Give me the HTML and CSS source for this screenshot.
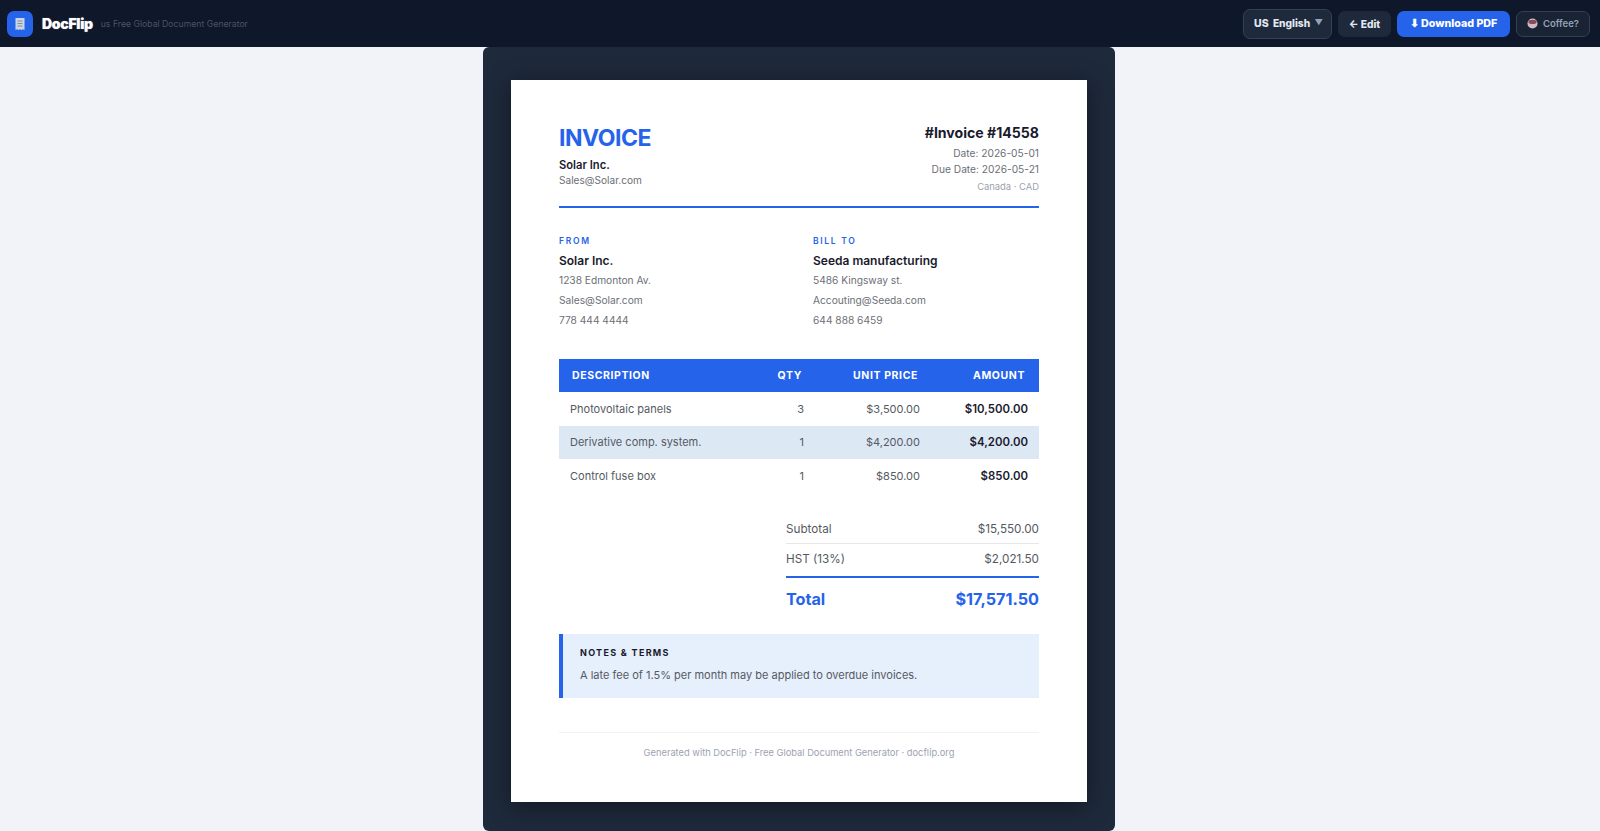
FILE: index.html
```html
<!DOCTYPE html>
<html lang="en">
<head>
    <meta charset="UTF-8">
    <meta name="viewport" content="width=device-width, initial-scale=1.0">
    <title>DocFlip</title>
    <link rel="stylesheet" href="styles.css">
</head>
<body>
    <header class="topbar">
        <div class="brand">
            <div class="logo">
                <svg width="14" height="14" viewBox="0 0 14 14">
                    <path d="M2.5 1h9v12l-1.5-.8-1.5.8-1.5-.8-1.5.8-1.5-.8-1.5.8z" fill="#cbd5e1"/>
                    <path d="M4.5 4h5M4.5 6.5h5M4.5 9h5" stroke="#7f8ea3" stroke-width="1"/>
                </svg>
            </div>
            <span class="brand-name">DocFlip</span>
            <span class="tagline">us Free Global Document Generator</span>
        </div>
        <div class="actions">
            <button class="btn btn-lang"><span class="flag">US</span> English <span class="caret">▼</span></button>
            <button class="btn btn-edit">← Edit</button>
            <button class="btn btn-primary">⬇ Download PDF</button>
            <button class="btn btn-coffee">
                <svg width="11" height="11" viewBox="0 0 12 12">
                    <circle cx="6" cy="6" r="5.5" fill="#cdbcc6"/>
                    <path d="M1.5 4.5a4.5 2.5 0 0 1 9 0a4.5 2 0 0 1-9 0z" fill="#8a4a58"/>
                </svg>
                Coffee?
            </button>
        </div>
    </header>

    <main class="stage">
        <div class="frame">
            <article class="paper">
                <section class="doc-head">
                    <div>
                        <h1 class="doc-title">INVOICE</h1>
                        <p class="company">Solar Inc.</p>
                        <p class="company-mail">Sales@Solar.com</p>
                    </div>
                    <div class="doc-meta">
                        <h2 class="doc-number">#Invoice #14558</h2>
                        <p>Date: 2026-05-01</p>
                        <p>Due Date: 2026-05-21</p>
                        <p class="region">Canada · CAD</p>
                    </div>
                </section>

                <section class="parties">
                    <div class="party">
                        <h3>FROM</h3>
                        <p class="party-name">Solar Inc.</p>
                        <p>1238 Edmonton Av.</p>
                        <p>Sales@Solar.com</p>
                        <p>778 444 4444</p>
                    </div>
                    <div class="party">
                        <h3>BILL TO</h3>
                        <p class="party-name">Seeda manufacturing</p>
                        <p>5486 Kingsway st.</p>
                        <p>Accouting@Seeda.com</p>
                        <p>644 888 6459</p>
                    </div>
                </section>

                <table class="items">
                    <thead>
                        <tr>
                            <th class="col-desc">DESCRIPTION</th>
                            <th class="col-qty">QTY</th>
                            <th class="col-price">UNIT PRICE</th>
                            <th class="col-amount">AMOUNT</th>
                        </tr>
                    </thead>
                    <tbody>
                        <tr>
                            <td>Photovoltaic panels</td>
                            <td class="num">3</td>
                            <td class="num">$3,500.00</td>
                            <td class="num amount">$10,500.00</td>
                        </tr>
                        <tr class="striped">
                            <td>Derivative comp. system.</td>
                            <td class="num">1</td>
                            <td class="num">$4,200.00</td>
                            <td class="num amount">$4,200.00</td>
                        </tr>
                        <tr>
                            <td>Control fuse box</td>
                            <td class="num">1</td>
                            <td class="num">$850.00</td>
                            <td class="num amount">$850.00</td>
                        </tr>
                    </tbody>
                </table>

                <section class="totals">
                    <div class="total-row"><span>Subtotal</span><span>$15,550.00</span></div>
                    <div class="total-row"><span>HST (13%)</span><span>$2,021.50</span></div>
                    <div class="grand-total"><span>Total</span><span>$17,571.50</span></div>
                </section>

                <section class="notes">
                    <h3>NOTES &amp; TERMS</h3>
                    <p>A late fee of 1.5% per month may be applied to overdue invoices.</p>
                </section>

                <footer class="doc-footer">Generated with DocFlip · Free Global Document Generator · docflip.org</footer>
            </article>
        </div>
    </main>
</body>
</html>
```

FILE: styles.css
```css
* {
    margin: 0;
    padding: 0;
    box-sizing: border-box;
}

body {
    background: #f1f3f8;
    font-family: Inter, "Liberation Sans", sans-serif;
    color: #1a1a2e;
}

/* Top bar */
.topbar {
    height: 47px;
    background: #0f172a;
    display: flex;
    align-items: center;
    justify-content: space-between;
    padding: 0 10px 0 7px;
}

.brand {
    display: flex;
    align-items: center;
}

.logo {
    width: 26px;
    height: 26px;
    border-radius: 7px;
    background: #2563eb;
    display: flex;
    align-items: center;
    justify-content: center;
    margin-right: 9px;
}

.brand-name {
    font-size: 14px;
    font-weight: 900;
    letter-spacing: -0.3px;
    color: #fff;
    text-shadow: 0 0 1px rgba(255, 255, 255, 0.6);
    margin-right: 8px;
}

.tagline {
    font-size: 8.7px;
    color: #475569;
}

.actions {
    display: flex;
    align-items: center;
    gap: 6px;
}

.btn {
    font-family: Inter, "Liberation Sans", sans-serif;
    font-size: 10.7px;
    font-weight: 800;
    color: #e2e8f0;
    border: none;
    border-radius: 7px;
    height: 26px;
    cursor: pointer;
}

.btn-lang {
    width: 89px;
    height: 30px;
    background: #1e293b;
    border: 1px solid #334155;
    font-size: 10.2px;
    padding-left: 2px;
}

.flag {
    font-weight: 800;
    font-size: 10.5px;
    margin-right: 2px;
}

.caret {
    font-size: 8px;
    color: #94a3b8;
    margin-left: 2px;
    vertical-align: 2px;
}

.btn-edit {
    width: 53px;
    background: #1e293b;
    font-size: 10.2px;
}

.btn-primary {
    width: 113px;
    background: #2563eb;
    color: #fff;
}

.btn-coffee {
    width: 74px;
    background: #1a2334;
    border: 1px solid #334155;
    color: #94a3b8;
    font-size: 9.5px;
    font-weight: 600;
    display: flex;
    align-items: center;
    justify-content: center;
    gap: 5px;
}

/* Page frame */
.stage {
    display: flex;
    justify-content: center;
    padding-right: 2px;
}

.frame {
    width: 632px;
    height: 784px;
    background: #1e293b;
    border-radius: 6px;
    padding: 33px 28px 28px;
}

.paper {
    width: 576px;
    height: 722px;
    background: #fff;
    padding: 40px 48px;
    box-shadow: 0 4px 24px rgba(0, 0, 0, 0.4);
}

/* Invoice header */
.doc-head {
    display: flex;
    justify-content: space-between;
    height: 88px;
    border-bottom: 2.5px solid #2563eb;
}

.doc-title {
    font-size: 23px;
    line-height: 29px;
    font-weight: 700;
    letter-spacing: -0.5px;
    color: #2563eb;
    margin-top: 4px;
}

.company {
    font-size: 11.2px;
    line-height: 15px;
    font-weight: 600;
    margin-top: 5px;
}

.company-mail {
    font-size: 10.1px;
    line-height: 15px;
    color: #6b6f76;
}

.doc-meta {
    text-align: right;
    font-size: 10.2px;
    line-height: 16px;
    color: #6b6f76;
    margin-top: 2px;
}

.doc-number {
    font-size: 14.1px;
    line-height: 22px;
    font-weight: 700;
    color: #1a1a2e;
    margin-bottom: 1px;
}

.region {
    font-size: 9.4px;
    line-height: 20px;
    color: #9ca3af;
}

/* From and bill to */
.parties {
    display: grid;
    grid-template-columns: 254px 1fr;
    margin-top: 26px;
}

.party h3 {
    font-size: 8.5px;
    line-height: 14px;
    font-weight: 600;
    letter-spacing: 1.7px;
    color: #2563eb;
}

.party p {
    font-size: 10.2px;
    line-height: 20px;
    color: #6b6f76;
}

.party .party-name {
    font-size: 12px;
    line-height: 19px;
    font-weight: 600;
    color: #1a1a2e;
    margin-top: 3px;
}

/* Line items */
.items {
    width: 480px;
    border-collapse: collapse;
    margin-top: 29px;
    font-size: 11px;
}

.items th {
    height: 33px;
    background: #2563eb;
    color: #fff;
    font-size: 10.5px;
    font-weight: 700;
    letter-spacing: 0.6px;
    text-align: right;
}

.items .col-desc {
    text-align: left;
    padding-left: 13px;
    width: 200px;
}

.items .col-qty {
    width: 45px;
    padding-right: 2px;
}

.items .col-price {
    width: 116px;
    padding-right: 2px;
}

.items .col-amount {
    padding-right: 14px;
}

.items td {
    height: 33.5px;
    padding: 0 11px;
    color: #555a62;
}

.items td.num {
    text-align: right;
    padding: 0;
}

.items td.amount {
    font-size: 11.4px;
    font-weight: 600;
    color: #1a1a2e;
    padding-right: 11px;
}

.striped {
    background: #dde8f5;
}

/* Totals */
.totals {
    width: 253px;
    margin: 21px 0 0 auto;
}

.total-row {
    display: flex;
    justify-content: space-between;
    font-size: 11.7px;
    color: #555a62;
    height: 30px;
    line-height: 30px;
    border-bottom: 1px solid #e5e7eb;
}

.total-row + .total-row {
    height: 32px;
    border-bottom: none;
}

.grand-total {
    display: flex;
    justify-content: space-between;
    border-top: 2px solid #2563eb;
    font-size: 16.2px;
    line-height: 23px;
    font-weight: 700;
    color: #2563eb;
    padding: 10px 0 0;
}

/* Notes */
.notes {
    height: 64px;
    margin-top: 23px;
    background: #e6effc;
    border-left: 4px solid #2563eb;
    padding: 12px 17px;
}

.notes h3 {
    font-size: 9px;
    line-height: 14px;
    font-weight: 700;
    letter-spacing: 1.3px;
}

.notes p {
    font-size: 11px;
    line-height: 16px;
    color: #555a62;
    margin-top: 7px;
}

/* Footer */
.doc-footer {
    margin-top: 34px;
    padding-top: 13px;
    border-top: 1px solid #f1f3f5;
    text-align: center;
    font-size: 9.3px;
    line-height: 14px;
    color: #9ca3af;
}
```
